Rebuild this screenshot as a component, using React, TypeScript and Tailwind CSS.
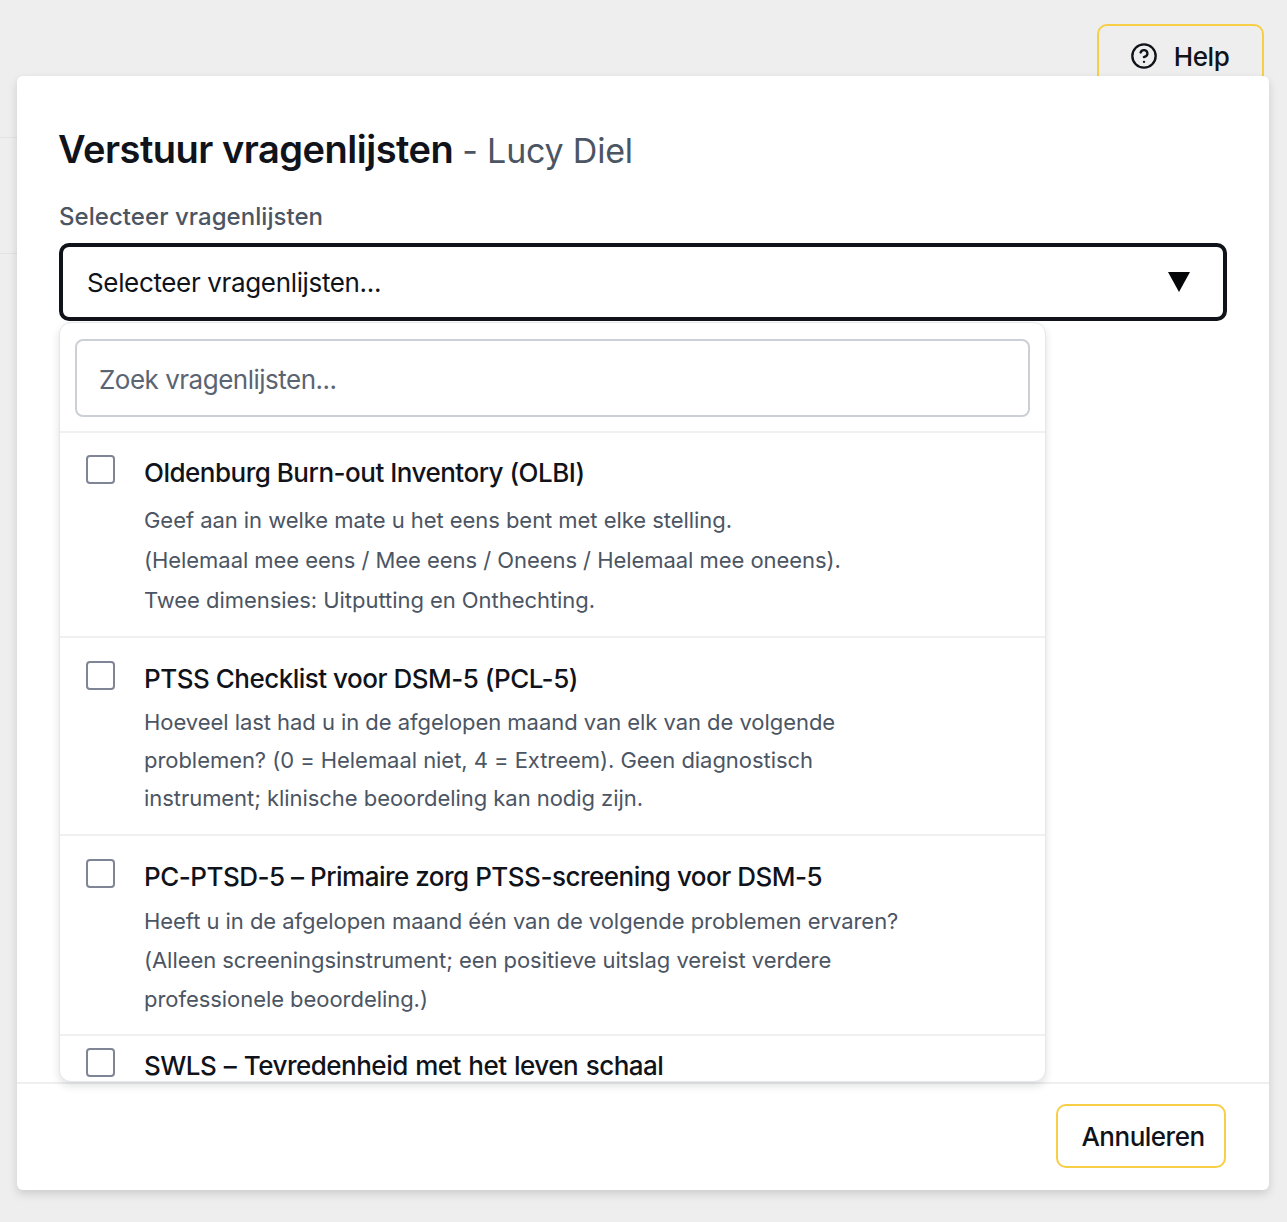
import { CircleHelp } from "lucide-react";

interface Questionnaire {
    title: string;
    lines: string[];
    rowClass: string;
    titleClass: string;
    lineClass: string;
}

const questionnaires: Questionnaire[] = [
    {
        title: "Oldenburg Burn-out Inventory (OLBI)",
        lines: [
            "Geef aan in welke mate u het eens bent met elke stelling.",
            "(Helemaal mee eens / Mee eens / Oneens / Helemaal mee oneens).",
            "Twee dimensies: Uitputting en Onthechting.",
        ],
        rowClass: "h-[205px] pt-[22px]",
        titleClass: "mb-[9px]",
        lineClass: "leading-[40px]",
    },
    {
        title: "PTSS Checklist voor DSM-5 (PCL-5)",
        lines: [
            "Hoeveel last had u in de afgelopen maand van elk van de volgende",
            "problemen? (0 = Helemaal niet, 4 = Extreem). Geen diagnostisch",
            "instrument; klinische beoordeling kan nodig zijn.",
        ],
        rowClass: "h-[198px] pt-[23px]",
        titleClass: "mb-[6px]",
        lineClass: "leading-[38px]",
    },
    {
        title: "PC-PTSD-5 – Primaire zorg PTSS-screening voor DSM-5",
        lines: [
            "Heeft u in de afgelopen maand één van de volgende problemen ervaren?",
            "(Alleen screeningsinstrument; een positieve uitslag vereist verdere",
            "professionele beoordeling.)",
        ],
        rowClass: "h-[200px] pt-[23px]",
        titleClass: "mb-[7px]",
        lineClass: "leading-[39px]",
    },
    {
        title: "SWLS – Tevredenheid met het leven schaal",
        lines: [],
        rowClass: "h-[47px] pt-[12px]",
        titleClass: "[word-spacing:1px]",
        lineClass: "",
    },
];

function QuestionnaireRow({ item, last }: { item: Questionnaire; last: boolean }) {
    return (
        <div className={`flex items-start ${item.rowClass} pl-[26px] overflow-hidden ${last ? "" : "border-b-2 border-[#eef0f2]"}`}>
            <div className="w-[29px] h-[29px] shrink-0 rounded-[4px] border-2 border-[#7f8594] bg-white" />
            <div className="ml-[29px] min-w-0">
                <div className={`text-[26px] leading-[36px] font-medium text-[#10131a] tracking-[-0.5px] whitespace-nowrap ${item.titleClass}`}>
                    {item.title}
                </div>
                {item.lines.map((line) => (
                    <div key={line} className={`text-[22px] ${item.lineClass} text-[#4b5563] tracking-[-0.05px] whitespace-nowrap`}>
                        {line}
                    </div>
                ))}
            </div>
        </div>
    );
}

export default function App() {
    return (
        <div className="relative h-[1222px] overflow-hidden bg-[#eeeeee] font-['Inter',sans-serif]">
            {/* page behind the dialog */}
            <div className="flex justify-end pt-[24px] pr-[23px]">
                <button className="flex items-center justify-center gap-[16px] w-[167px] h-[66px] pb-[2px] pr-[2px] rounded-[10px] border-2 border-[#f7ce46] text-[26px] font-medium text-[#10131a] tracking-[-0.4px]">
                    <CircleHelp size={28} strokeWidth={2} />
                    Help
                </button>
            </div>
            <div className="absolute left-0 top-[137px] w-[17px] border-t border-[#e2e2e2]" />
            <div className="absolute left-0 top-[253px] w-[17px] border-t border-[#e2e2e2]" />

            {/* dialog */}
            <div className="absolute left-[17px] top-[76px] w-[1252px] h-[1114px] flex flex-col rounded-[6px] bg-white shadow-[0_4px_10px_rgba(0,0,0,0.14)]">
                <div className="relative flex-1 px-[42px] pt-[46px]">
                    <h2 className="flex items-baseline h-[54px] leading-[54px] whitespace-nowrap">
                        <span className="ml-[-1px] text-[38px] font-semibold text-[#10131a] tracking-[-0.5px]">Verstuur vragenlijsten</span>
                        <span className="ml-[9px] text-[34px] font-normal text-[#4b5563] tracking-[-0.2px]">- Lucy Diel</span>
                    </h2>
                    <div className="mt-[25px] text-[24px] leading-[32px] font-medium text-[#4b5563] tracking-[0.05px]">
                        Selecteer vragenlijsten
                    </div>
                    <div className="mt-[10px] flex items-center justify-between h-[78px] rounded-[10px] border-4 border-[#10131a] pl-[24px] pr-[32px] bg-white">
                        <span className="text-[26px] text-[#10131a] tracking-[-0.35px]">Selecteer vragenlijsten...</span>
                        <svg width="24" height="20" viewBox="0 0 24 20">
                            <path d="M1 0 H23 L12 20 Z" fill="#050608" />
                        </svg>
                    </div>

                    {/* open dropdown, hangs over the footer line */}
                    <div className="absolute left-[42px] top-[246px] z-10 w-[987px] h-[760px] overflow-hidden rounded-[12px] border border-[#e5e7eb] bg-white shadow-[0_4px_8px_rgba(0,0,0,0.12)]">
                        <div className="h-[110px] px-[15px] pt-[16px] border-b-2 border-[#eef0f2]">
                            <div className="flex items-center h-[78px] pt-[2px] rounded-[8px] border-2 border-[#ccd0d6] pl-[22px] text-[26px] text-[#5b6472] tracking-[-0.5px]">
                                Zoek vragenlijsten...
                            </div>
                        </div>
                        {questionnaires.map((item, i) => (
                            <QuestionnaireRow key={item.title} item={item} last={i === questionnaires.length - 1} />
                        ))}
                    </div>
                </div>
                <div className="flex justify-end h-[108px] border-t-2 border-[#eeeff1] pt-[20px] pr-[43px]">
                    <button className="w-[170px] h-[64px] pl-[4px] rounded-[10px] border-2 border-[#f7ce46] bg-white text-[26px] font-medium text-[#10131a] tracking-[-0.5px]">
                        Annuleren
                    </button>
                </div>
            </div>
        </div>
    );
}
